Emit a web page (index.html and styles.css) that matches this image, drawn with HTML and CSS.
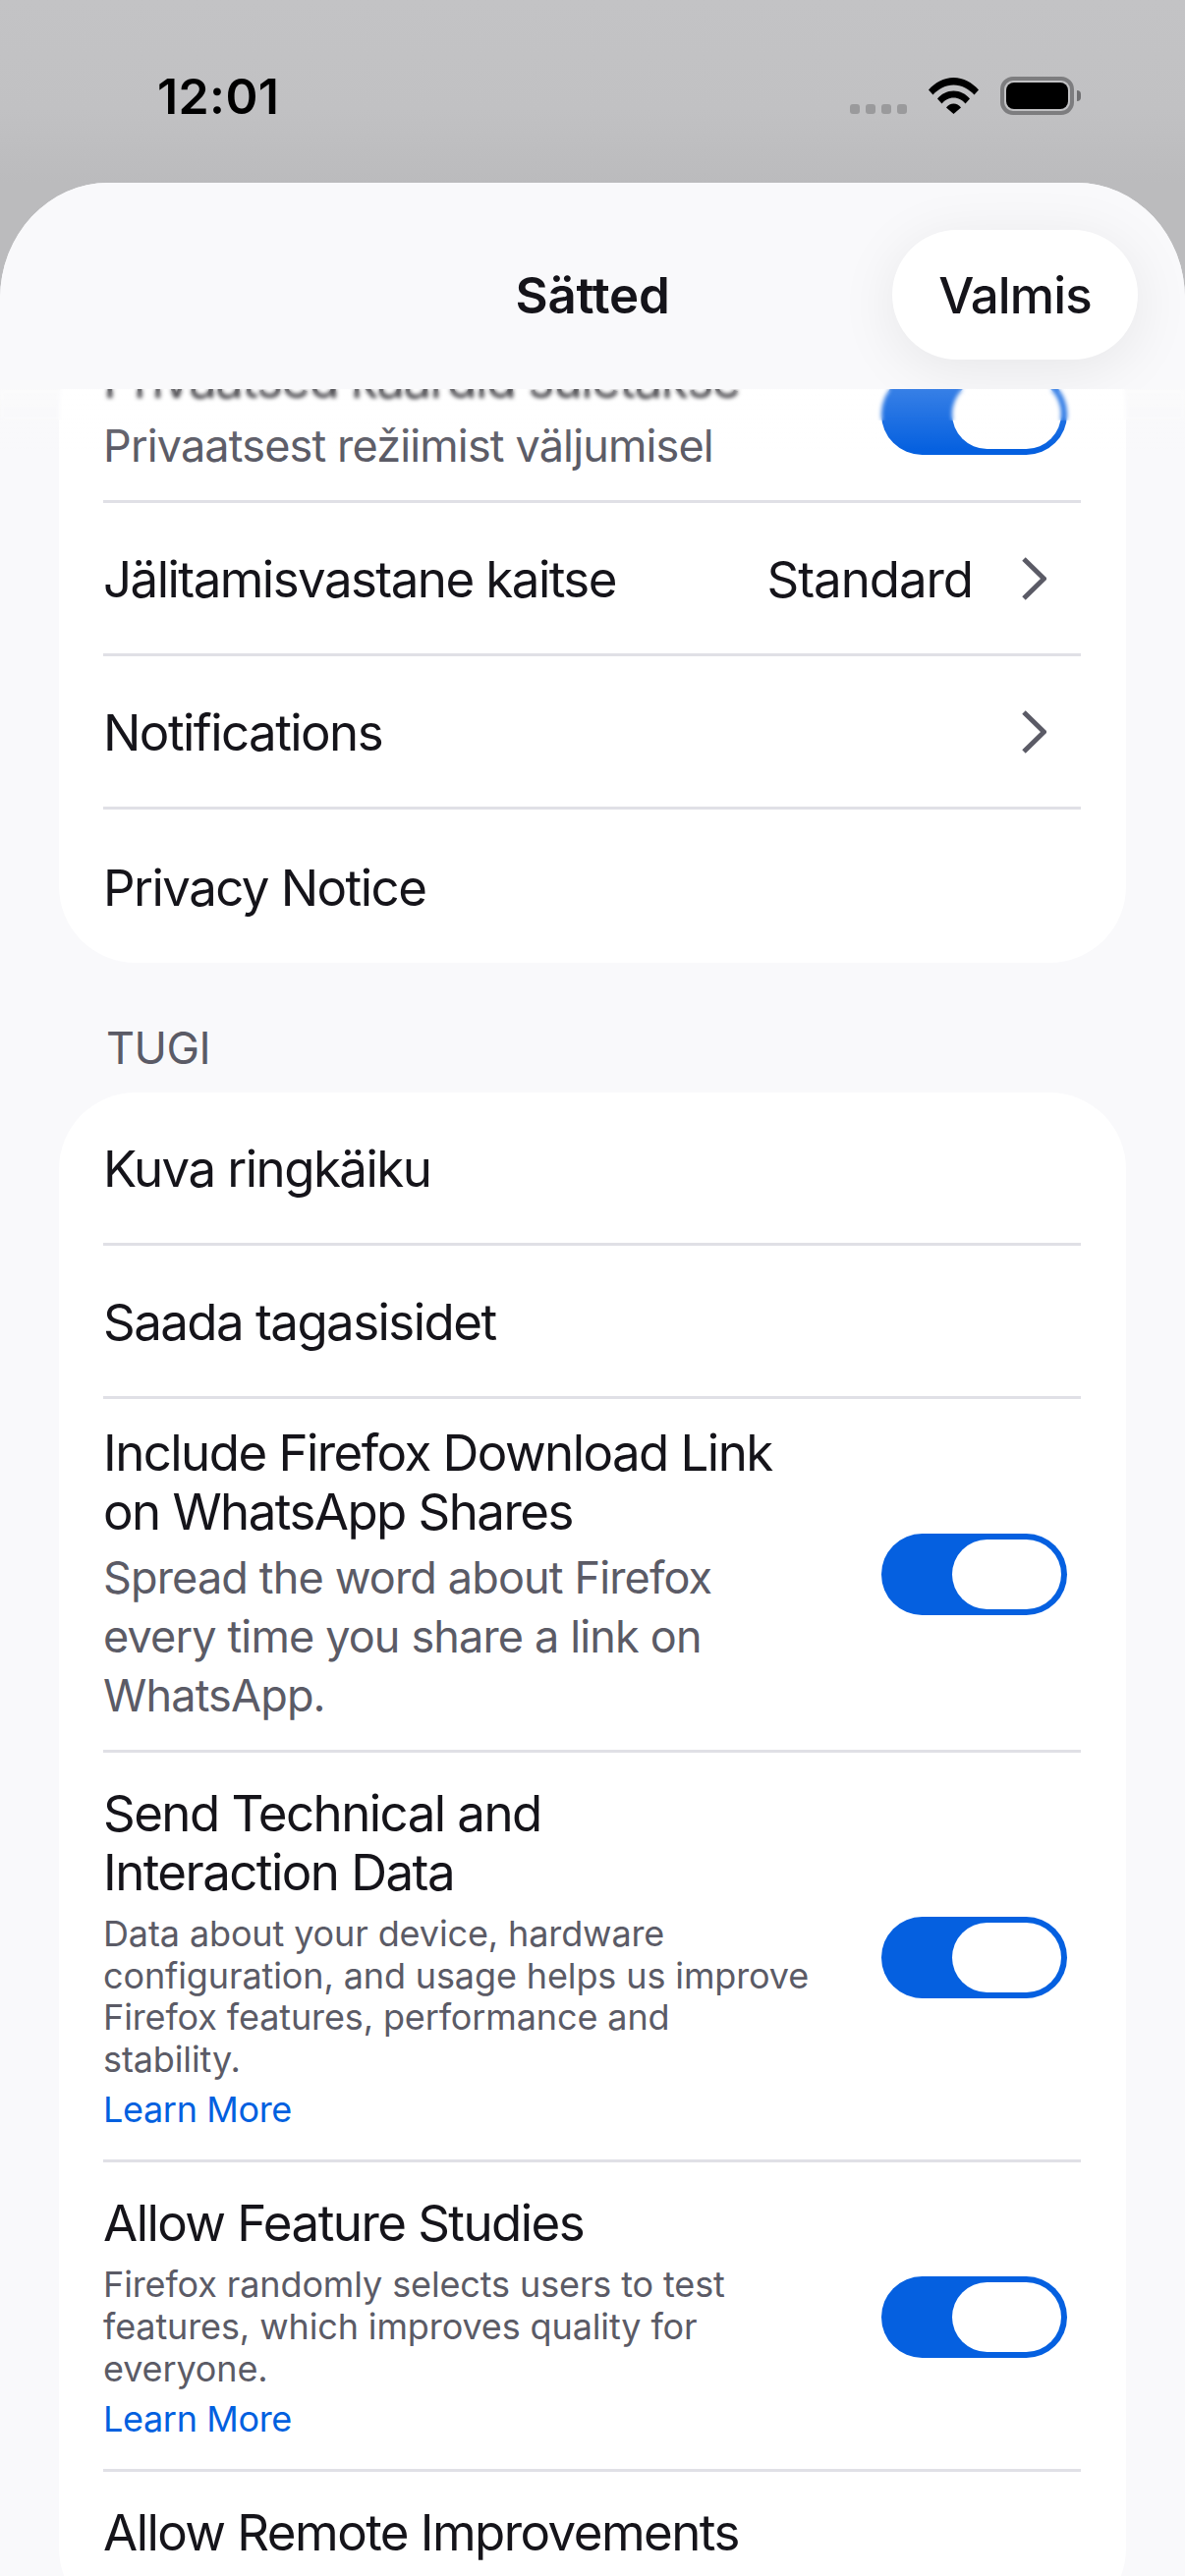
FILE: index.html
```html
<!DOCTYPE html>
<html lang="et">

<head>
    <meta charset="UTF-8">
    <meta name="viewport" content="width=device-width, initial-scale=1.0">
    <title>Sätted</title>
    <link rel="stylesheet" href="styles.css">
</head>

<body>
    <div class="status-bar">
        <span class="time">12:01</span>
        <div class="status-icons">
            <div class="signal"><i></i><i></i><i></i><i></i></div>
            <svg class="wifi" width="51" height="37" viewBox="0 0 51 37">
                <path d="M0 12.5C6.500 5 15.500 0 25.500 0S44.500 5 51 12.500L46.500 17.500C41 11.500 33.500 7.500 25.500 7.500S10 11.500 4.500 17.500Z" />
                <path d="M9 21.500C13 16.500 19 13.500 25.500 13.500S38 16.500 42 21.500L37.500 26.500C34.500 23 30.500 20.500 25.500 20.500S16.500 23 13.500 26.500Z" />
                <path d="M18 30.500C20 28 22.500 26.500 25.500 26.500S31 28 33 30.500L25.500 37Z" />
            </svg>
            <div class="battery"><div class="battery-fill"></div></div>
            <div class="battery-nub"></div>
        </div>
    </div>

    <div class="sheet">
        <div class="sheet-header">
            <h1>Sätted</h1>
            <button class="done-button">Valmis</button>
        </div>

        <div class="sheet-body">
            <div class="scroll-blur"></div>
            <div class="scroll-fade"></div>

            <div class="card card-clipped">
                <div class="row row-tall">
                    <div class="row-text">
                        <div class="row-title">Privaatsed kaardid suletakse</div>
                        <div class="row-sub">Privaatsest režiimist väljumisel</div>
                    </div>
                    <div class="toggle"><div class="knob"></div></div>
                </div>
                <div class="row">
                    <div class="row-title">Jälitamisvastane kaitse</div>
                    <div class="row-value">Standard</div>
                    <svg class="chevron" width="25" height="44" viewBox="0 0 25 44"><path d="M2 2L22.500 22L2 42" /></svg>
                </div>
                <div class="row">
                    <div class="row-title">Notifications</div>
                    <svg class="chevron" width="25" height="44" viewBox="0 0 25 44"><path d="M2 2L22.500 22L2 42" /></svg>
                </div>
                <div class="row last-row">
                    <div class="row-title">Privacy Notice</div>
                </div>
            </div>

            <div class="section-label">TUGI</div>

            <div class="card">
                <div class="row">
                    <div class="row-title">Kuva ringkäiku</div>
                </div>
                <div class="row">
                    <div class="row-title">Saada tagasisidet</div>
                </div>
                <div class="row row-include">
                    <div class="row-text">
                        <div class="row-title">Include Firefox Download Link<br>on WhatsApp Shares</div>
                        <div class="row-sub">Spread the word about Firefox<br>every time you share a link on<br>WhatsApp.</div>
                    </div>
                    <div class="toggle"><div class="knob"></div></div>
                </div>
                <div class="row row-long">
                    <div class="row-text">
                        <div class="row-title">Send Technical and<br>Interaction Data</div>
                        <div class="row-small">Data about your device, hardware<br>configuration, and usage helps us improve<br>Firefox features, performance and<br>stability.</div>
                        <a class="learn-more">Learn More</a>
                    </div>
                    <div class="toggle"><div class="knob"></div></div>
                </div>
                <div class="row row-long">
                    <div class="row-text">
                        <div class="row-title">Allow Feature Studies</div>
                        <div class="row-small">Firefox randomly selects users to test<br>features, which improves quality for<br>everyone.</div>
                        <a class="learn-more">Learn More</a>
                    </div>
                    <div class="toggle"><div class="knob"></div></div>
                </div>
                <div class="row row-cut">
                    <div class="row-title">Allow Remote Improvements</div>
                </div>
            </div>
        </div>
    </div>
</body>

</html>
```

FILE: styles.css
```css
html,
body {
    height: 100%;
}

body {
    margin: 0;
    height: 2622px;
    overflow: hidden;
    font-family: Inter, "Noto Sans", sans-serif;
    color: #15141a;
    background: #bbbbbd;
    display: flex;
    flex-direction: column;
}

.status-bar {
    height: 186px;
    flex-shrink: 0;
    box-sizing: border-box;
    padding: 72px 106px 0 160px;
    display: flex;
    justify-content: space-between;
    align-items: flex-start;
    background: linear-gradient(#c3c3c5, #c1c1c3 60%, #bbbbbd);
}

.time {
    font-size: 50px;
    font-weight: 600;
    line-height: 52px;
    letter-spacing: 0.4px;
    color: #000;
}

.status-icons {
    display: flex;
    align-items: flex-start;
    padding-top: 6px;
}

.signal {
    display: flex;
    gap: 6px;
    margin: 28px 22px 0 0;
}

.signal i {
    width: 10px;
    height: 10px;
    border-radius: 3px;
    background: #9a9a9c;
}

.wifi {
    margin: 1px 22px 0 0;
    fill: #000;
}

.battery {
    box-sizing: border-box;
    width: 75px;
    height: 39px;
    padding: 2px;
    border: 4px solid #7d7d7f;
    border-radius: 13px;
}

.battery-fill {
    height: 100%;
    background: #000;
    border-radius: 8px;
}

.battery-nub {
    width: 4px;
    height: 11px;
    margin: 14px 0 0 3px;
    background: #6f6f71;
    border-radius: 0 6px 6px 0;
}

.sheet {
    flex: 1;
    min-height: 0;
    display: flex;
    flex-direction: column;
    background: #f9f9fb;
    border-radius: 110px 110px 0 0 / 118px 118px 0 0;
    overflow: hidden;
}

.sheet-header {
    height: 210px;
    flex-shrink: 0;
    display: flex;
    align-items: center;
    justify-content: flex-end;
    box-sizing: border-box;
    padding: 0 48px 0 0;
    position: relative;
    z-index: 2;
    overflow: hidden;
    background: #f9f9fb;
}

.sheet-header h1 {
    position: absolute;
    left: 0;
    right: 0;
    top: 85px;
    margin: 0;
    text-align: center;
    font-size: 51px;
    line-height: 60px;
    font-weight: 600;
    letter-spacing: -0.2px;
}

.done-button {
    width: 250px;
    height: 132px;
    margin-top: 18px;
    padding: 0;
    border: none;
    border-radius: 66px;
    background: #fff;
    color: #15141a;
    font-family: inherit;
    font-size: 51px;
    font-weight: 500;
    letter-spacing: -0.9px;
    box-shadow: 0 10px 60px rgba(0, 0, 0, 0.08);
}

.sheet-body {
    flex: 1;
    min-height: 0;
    position: relative;
    overflow: hidden;
    padding: 0 60px;
}

.scroll-blur {
    position: absolute;
    top: 0;
    left: 0;
    right: 0;
    height: 32px;
    z-index: 1;
    backdrop-filter: blur(2px);
}

.scroll-fade {
    position: absolute;
    top: 0;
    left: 0;
    right: 0;
    height: 64px;
    z-index: 1;
    background: linear-gradient(rgba(255, 255, 255, 0.2), rgba(255, 255, 255, 0));
}

.card {
    background: #fff;
    border-radius: 78px;
}

.card-clipped {
    margin-top: -62px;
}

.row {
    box-sizing: border-box;
    min-height: 156px;
    margin: 0 46px 0 45px;
    display: flex;
    align-items: center;
    border-bottom: 3px solid #e0e0e6;
}

.row > .row-title {
    padding-top: 3px;
}

.last-row {
    border-bottom: none;
}

.row-tall {
    height: 178px;
}

.row-tall .row-text {
    margin-top: -2px;
}

.row-include {
    height: 360px;
}

.row-long {
    padding: 32px 0 29px;
}

.row-cut {
    align-items: flex-start;
    padding-top: 29px;
}

.row-text {
    flex: 1;
    min-width: 0;
}

.row-title {
    font-size: 51px;
    line-height: 60px;
    letter-spacing: -1.55px;
    flex: 1;
    white-space: nowrap;
}

.row-value {
    font-size: 51px;
    line-height: 60px;
    letter-spacing: -1.05px;
    padding-top: 3px;
    margin-right: 50px;
}

.row-sub {
    font-size: 45px;
    line-height: 60px;
    letter-spacing: -0.85px;
    color: #5b5b66;
    margin-top: 7px;
    white-space: nowrap;
}

.row-small {
    font-size: 36px;
    line-height: 42.6px;
    letter-spacing: -0.12px;
    color: #5b5b66;
    margin-top: 11px;
    white-space: nowrap;
}

.learn-more {
    display: block;
    font-size: 36px;
    line-height: 43px;
    letter-spacing: -0.35px;
    color: #0060df;
    margin-top: 9px;
}

.chevron {
    fill: none;
    stroke: #5b5b66;
    stroke-width: 5;
    margin-right: 35px;
    flex-shrink: 0;
}

.toggle {
    box-sizing: border-box;
    width: 189px;
    height: 83px;
    flex-shrink: 0;
    margin-right: 14px;
    padding: 6px;
    display: flex;
    justify-content: flex-end;
    background: #0560e0;
    border-radius: 42px;
}

.knob {
    width: 111px;
    height: 71px;
    background: #fff;
    border-radius: 36px;
}

.section-label {
    font-size: 45px;
    line-height: 54px;
    letter-spacing: -0.5px;
    color: #5b5b66;
    padding: 0 0 0 48px;
    margin: 60px 0 18px;
}
```
